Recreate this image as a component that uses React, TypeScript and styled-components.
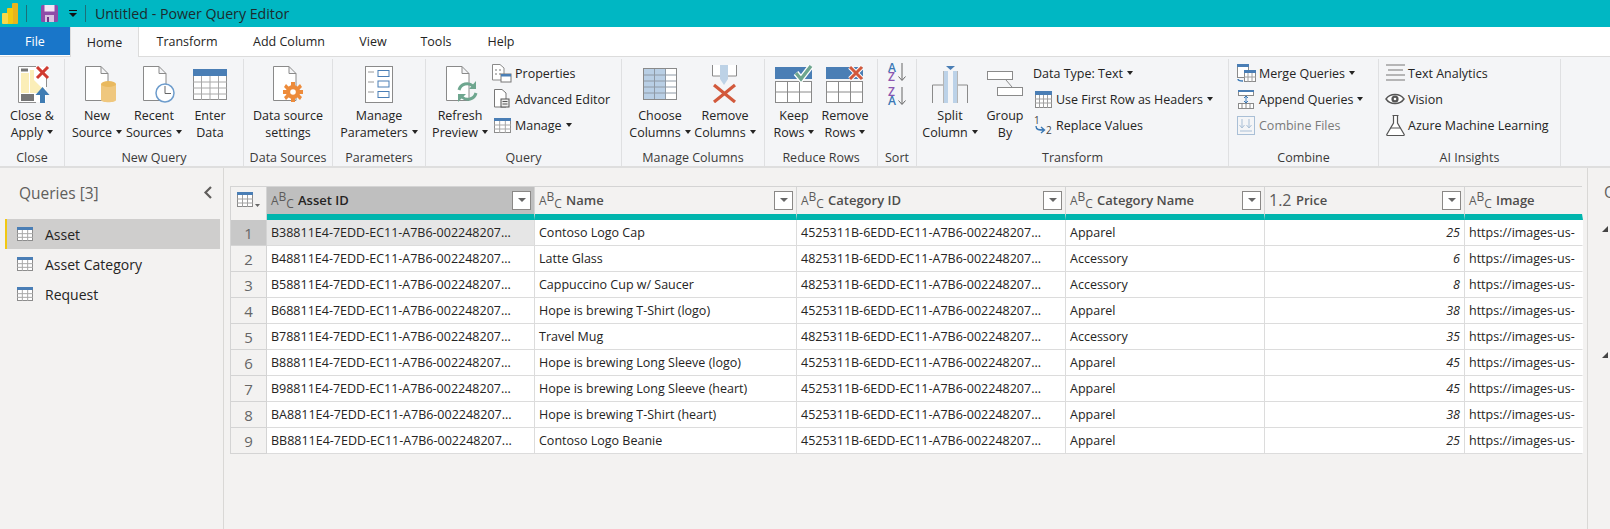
import React from 'react';
import styled, { createGlobalStyle } from 'styled-components';

const GlobalStyle = createGlobalStyle`
  html, body {
    margin: 0;
    padding: 0;
    background: #f3f2f1;
    overflow: hidden;
  }
  * { box-sizing: border-box; }
`;

const FONT = `"Open Sans", "Noto Sans", sans-serif`;

const Page = styled.div`
  width: 1610px;
  height: 529px;
  display: flex;
  flex-direction: column;
  font-family: ${FONT};
  font-size: 12.5px;
  color: #252423;
  overflow: hidden;
`;

const TitleBar = styled.div`
  height: 27px;
  background: #00b7c3;
  display: flex;
  align-items: center;
  padding-left: 2px;
  flex: none;
`;

const TitleSep = styled.span<{ $r?: number }>`
  width: 1px;
  height: 17px;
  background: #1c6f78;
  margin: 0 ${(p) => p.$r ?? 12}px 0 8px;
`;

const QatGap = styled.span`
  width: 11px;
`;

const TitleText = styled.span`
  font-size: 14.2px;
  color: #1c2b2e;
  margin-left: -3px;
`;

const TabBar = styled.div`
  height: 29px;
  background: #fff;
  display: flex;
  flex: none;
`;

const Tab = styled.div<{ $w: number; $active?: boolean; $file?: boolean }>`
  width: ${(p) => p.$w}px;
  height: ${(p) => (p.$active ? 30 : 28)}px;
  display: flex;
  align-items: center;
  justify-content: center;
  font-size: 12.5px;
  color: ${(p) => (p.$file ? '#fff' : '#252423')};
  background: ${(p) => (p.$file ? '#1976c9' : p.$active ? '#f4f5f7' : '#fff')};
  border-left: ${(p) => (p.$active ? '1px solid #dcdcdc' : 'none')};
  border-right: ${(p) => (p.$active ? '1px solid #dcdcdc' : 'none')};
  position: relative;
  z-index: 1;
`;

const Ribbon = styled.div`
  height: 112px;
  background: #f4f5f7;
  border-top: 1px solid #dcdcdc;
  border-bottom: 2px solid #dedede;
  display: flex;
  padding-top: 2px;
  flex: none;
`;

const Group = styled.div<{ $w: number }>`
  width: ${(p) => p.$w}px;
  height: 107px;
  border-right: 1px solid #dfe0e2;
  display: flex;
  flex-direction: column;
  flex: none;
`;

const GroupBody = styled.div<{ $pad?: number }>`
  flex: 1;
  display: flex;
  padding-left: ${(p) => p.$pad ?? 0}px;
`;

const GroupLabel = styled.div`
  height: 23px;
  padding-top: 5px;
  text-align: center;
  font-size: 12.5px;
  line-height: 18px;
  color: #3b3a39;
  white-space: nowrap;
  margin-bottom: -1px;
`;

const BigButton = styled.div<{ $w: number }>`
  width: ${(p) => p.$w}px;
  display: flex;
  flex-direction: column;
  align-items: center;
  padding-top: 5px;
  flex: none;
`;

const IconSlot = styled.div<{ $dx?: number }>`
  height: 40px;
  display: flex;
  align-items: center;
  justify-content: center;
  margin-bottom: 3px;
  padding-left: ${(p) => p.$dx ?? 0}px;
`;

const BigLabel = styled.div`
  font-size: 12.5px;
  line-height: 17px;
  text-align: center;
  white-space: nowrap;
  color: #252423;
`;

const Caret = styled.span`
  display: inline-block;
  width: 0;
  height: 0;
  border-left: 3.5px solid transparent;
  border-right: 3.5px solid transparent;
  border-top: 4px solid #252423;
  margin-left: 4px;
  vertical-align: 3px;
`;

const SmallStack = styled.div<{ $ml?: number }>`
  display: flex;
  flex-direction: column;
  padding-top: 1px;
  margin-left: ${(p) => p.$ml ?? 0}px;
  flex: none;
`;

const SmallRow = styled.div<{ $off?: boolean }>`
  height: 26px;
  display: flex;
  align-items: center;
  gap: 3px;
  white-space: nowrap;
  color: ${(p) => (p.$off ? '#7a7a7a' : '#252423')};
`;

const SmallIcon = styled.span`
  width: 20px;
  height: 20px;
  display: flex;
  align-items: center;
  justify-content: center;
  flex: none;
`;

const SortStack = styled.div`
  display: flex;
  flex-direction: column;
  padding: 3px 0 0 9px;
  gap: 4px;
`;

const SortSvg = styled.svg`
  overflow: visible;
`;

const Body = styled.div`
  flex: 1;
  display: flex;
  min-height: 0;
`;

const Sidebar = styled.div`
  width: 224px;
  border-right: 1px solid #d9d8d6;
  padding-top: 13px;
  flex: none;
`;

const SidebarHead = styled.div`
  height: 23px;
  display: flex;
  align-items: center;
  justify-content: space-between;
  padding: 0 10px 0 19px;
  font-size: 15.5px;
  color: #605e5c;
  margin-bottom: 15px;
`;

const QueryItem = styled.div<{ $active?: boolean }>`
  width: 215px;
  margin-left: 5px;
  height: 30px;
  display: flex;
  align-items: center;
  gap: 12px;
  padding-left: 10px;
  font-size: 14px;
  color: #252423;
  background: ${(p) => (p.$active ? '#cfcecd' : 'transparent')};
  border-left: 2px solid ${(p) => (p.$active ? '#f2c811' : 'transparent')};
`;

const Main = styled.div`
  flex: 1;
  padding: 18px 0 0 6px;
  min-width: 0;
`;

const Grid = styled.div`
  width: 1352px;
  display: grid;
  grid-template-columns: 36px 268px 262px 269px 199px 200px 118px;
  border-top: 1px solid #d4d4d4;
  border-left: 1px solid #d4d4d4;
  font-size: 12.5px;
`;

const Corner = styled.div`
  height: 33px;
  background: #f3f2f1;
  border-right: 1px solid #d4d4d4;
  display: flex;
  align-items: flex-start;
  justify-content: center;
  padding-top: 5px;
`;

const Head = styled.div<{ $sel?: boolean; $last?: boolean }>`
  height: 33px;
  background: ${(p) => (p.$sel ? '#bfbfbf' : '#f3f2f1')};
  border-bottom: 6px solid #00b5ad;
  border-right: 1px solid ${(p) => (p.$last ? 'transparent' : '#d4d4d4')};
  display: flex;
  align-items: center;
  padding: 0 3px 1px 4px;
  font-weight: 600;
  color: ${(p) => (p.$sel ? '#252423' : '#4e4d4c')};
  font-size: 13px;
  white-space: nowrap;
`;

const TypeTag = styled.span`
  width: 26px;
  flex: none;
  font-weight: 400;
  color: #5c5b5a;
  display: inline-flex;
  align-items: center;
`;

const TypeLetter = styled.span<{ $y: number }>`
  font-size: 12px;
  line-height: 12px;
  transform: translateY(${(p) => p.$y}px);
`;

const NumMark = styled(TypeTag)`
  font-size: 16px;
  color: #5c5b5a;
`;

const HeadName = styled.span`
  flex: 1;
  margin-left: 1px;
`;

const Filter = styled.span`
  width: 19px;
  height: 19px;
  background: #fff;
  border: 1px solid #8a8886;
  display: flex;
  align-items: center;
  justify-content: center;
  flex: none;
  &::after {
    content: '';
    border-left: 4px solid transparent;
    border-right: 4px solid transparent;
    border-top: 4px solid #666;
  }
`;

const RowNum = styled.div<{ $sel?: boolean }>`
  height: 26px;
  background: ${(p) => (p.$sel ? '#c8c8c8' : '#f3f2f1')};
  border-right: 1px solid #d4d4d4;
  border-bottom: 1px solid #d4d4d4;
  display: flex;
  align-items: center;
  justify-content: center;
  font-size: 15px;
  color: #666;
`;

const Cell = styled.div<{ $sel?: boolean; $num?: boolean; $last?: boolean }>`
  height: 26px;
  background: ${(p) => (p.$sel ? '#e6e6e6' : '#fff')};
  border-right: 1px solid ${(p) => (p.$last ? 'transparent' : '#dcdcdc')};
  border-bottom: 1px solid #dcdcdc;
  display: flex;
  align-items: center;
  justify-content: ${(p) => (p.$num ? 'flex-end' : 'flex-start')};
  padding: 0 4px;
  font-style: ${(p) => (p.$num ? 'italic' : 'normal')};
  white-space: nowrap;
  overflow: hidden;
  color: #252423;
`;

const RightPane = styled.div`
  width: 23px;
  flex: none;
  border-left: 1px solid #d9d8d6;
  padding: 13px 0 0 16px;
  position: relative;
  overflow: hidden;
  font-size: 15.5px;
  color: #605e5c;
  white-space: nowrap;
`;

const PaneMark = styled.div<{ $top: number }>`
  position: absolute;
  left: 14px;
  top: ${(p) => p.$top}px;
  width: 0;
  height: 0;
  border-left: 6px solid transparent;
  border-bottom: 6px solid #444;
`;

// ---- icons ----

const TableIcon = ({ w = 16, h = 14, cols = 3, rows = 2 }: { w?: number; h?: number; cols?: number; rows?: number }) => {
  const top = Math.round(h * 0.22);
  const lines = [];
  for (let i = 1; i < cols; i++) {
    const x = (w * i) / cols;
    lines.push(<path key={`c${i}`} d={`M${x} ${top}V${h}`} stroke="#a8a8a8" strokeWidth="1" />);
  }
  for (let i = 1; i <= rows; i++) {
    const y = top + ((h - top) * i) / (rows + 1);
    lines.push(<path key={`r${i}`} d={`M0 ${y}H${w}`} stroke="#a8a8a8" strokeWidth="1" />);
  }
  return (
    <svg width={w} height={h} viewBox={`0 0 ${w} ${h}`}>
      <rect x=".5" y=".5" width={w - 1} height={h - 1} fill="#fff" stroke="#8d8d8d" />
      {lines}
      <rect x="0" y="0" width={w} height={top} fill="#4a7eb5" />
    </svg>
  );
};

const Doc = () => (
  <path d="M1.5 1.5H17L24 8.5V35.5H1.5Z M17 1.5V8.5H24" fill="#fff" stroke="#8a8a8a" strokeWidth="1" />
);

const PowerBiLogo = () => (
  <svg width="16" height="21" viewBox="0 0 16 21">
    <rect x="10" y="0" width="6" height="21" rx="1" fill="#e8b41d" />
    <rect x="5" y="5" width="6" height="16" rx="1" fill="#f2c811" />
    <rect x="0" y="10" width="6" height="11" rx="1" fill="#f8d94a" />
  </svg>
);

const SaveIcon = () => (
  <svg width="17" height="17" viewBox="0 0 17 17">
    <rect width="17" height="17" rx="1.5" fill="#8e4ca8" />
    <rect x="3.5" y="0" width="10" height="6.5" fill="#f1e7f5" />
    <rect x="4" y="10" width="9" height="7" fill="#d9c1e2" />
    <rect x="6" y="12" width="2" height="5" fill="#6e3589" />
  </svg>
);

const QatCaret = () => (
  <svg width="8" height="9" viewBox="0 0 8 9">
    <path d="M0 1H8V2H0Z M0 4H8L4 8Z" fill="#111" />
  </svg>
);

const CloseApplyIcon = () => (
  <svg width="32" height="37" viewBox="0 0 32 37">
    <rect x="1" y="1" width="27" height="35" fill="#fff" />
    <path d="M.5 .5V36.5M.5 .5H18M.5 36.5H18M28.5 12V21" fill="none" stroke="#8f8f8f" />
    <path d="M3 7H11V27H3Z M12 4H16V14L27 25V27H12Z" fill="#fbeeb8" />
    <rect x="3" y="2.5" width="7" height="3" fill="#767676" />
    <rect x="3" y="28" width="13" height="7" fill="#767676" />
    <path d="M19 1L30 12M30 1L19 12" stroke="#d03a30" strokeWidth="3" />
    <path d="M24.5 21L17.5 29H22V37H27V29H31.5Z" fill="#3f7cb3" />
  </svg>
);

const NewSourceIcon = () => (
  <svg width="33" height="38" viewBox="0 0 33 38">
    <Doc />
    <path d="M17 19H32V35C32 38 17 38 17 35Z" fill="#efc77e" />
    <ellipse cx="24.5" cy="19" rx="7.5" ry="3" fill="#e9b95f" />
  </svg>
);

const RecentIcon = () => (
  <svg width="33" height="38" viewBox="0 0 33 38">
    <Doc />
    <circle cx="23" cy="28" r="9" fill="#fff" stroke="#6d9ccc" strokeWidth="1.5" />
    <path d="M23 21V28.5H29" fill="none" stroke="#666" strokeWidth="1" />
  </svg>
);

const GearIcon = () => (
  <svg width="33" height="38" viewBox="0 0 33 38">
    <Doc />
    <circle cx="21" cy="27" r="7" fill="#ed8b3b" />
    <path d="M19 17H23V21H19Z M19 33H23V37H19Z M11 25H15V29H11Z M27 25H31V29H27Z M14 19L17 22L15 25L12 22Z M28 19L25 22L27 25L30 22Z M14 35L17 32L15 29L12 32Z M28 35L25 32L27 29L30 32Z" fill="#ed8b3b" />
    <circle cx="21" cy="27" r="2.8" fill="#fff" />
  </svg>
);

const ParamsIcon = () => (
  <svg width="29" height="37" viewBox="0 0 29 37">
    <rect x=".5" y=".5" width="27" height="36" fill="#fff" stroke="#8a8a8a" />
    <path d="M3 6H9M3 16H9M3 26H9" stroke="#9a9a9a" />
    <rect x="13" y="4.5" width="11" height="6" fill="#fff" stroke="#4a7eb5" />
    <rect x="13" y="15" width="11" height="6" fill="#fff" stroke="#4a7eb5" />
    <rect x="13" y="25.5" width="11" height="6" fill="#fff" stroke="#4a7eb5" />
  </svg>
);

const RefreshIcon = () => (
  <svg width="33" height="38" viewBox="0 0 33 38">
    <Doc />
    <path d="M14 25A8.5 8.5 0 0 1 28 21" fill="none" stroke="#6ea68f" strokeWidth="3" />
    <path d="M31 16V24H24Z" fill="#6ea68f" />
    <path d="M31 28A8.5 8.5 0 0 1 17 32" fill="none" stroke="#6ea68f" strokeWidth="3" />
    <path d="M13 37V29H21Z" fill="#6ea68f" />
  </svg>
);

const PropsIcon = () => (
  <svg width="20" height="19" viewBox="0 0 20 19">
    <path d="M.5 .5H8L12 4V16H.5Z" fill="#fff" stroke="#8a8a8a" />
    <path d="M3 6H5M7 6H9M3 10H5M7 10H9" stroke="#777" />
    <rect x="9" y="10" width="10" height="8" fill="#fff" stroke="#777" />
    <rect x="9" y="10" width="10" height="2.5" fill="#4a7eb5" />
  </svg>
);

const AdvancedIcon = () => (
  <svg width="17" height="20" viewBox="0 0 17 20">
    <path d="M.5 .5H8L12 4V18H.5Z" fill="#fff" stroke="#777" />
    <rect x="7" y="10" width="8" height="8" fill="#eee" stroke="#555" />
    <path d="M8.5 12.5H13.5M8.5 15H13.5" stroke="#555" />
  </svg>
);

const ChooseIcon = () => (
  <svg width="34" height="33" viewBox="0 0 34 33">
    <rect x=".5" y=".5" width="33" height="31" fill="#fff" stroke="#8a8a8a" />
    <rect x="1" y="1" width="22" height="30" fill="#b9cfe5" />
    <path d="M11.5 1V31M22.5 1V31M1 7H33M1 13H33M1 19H33M1 25H33" stroke="#8f9aa6" strokeWidth="1" />
  </svg>
);

const RemoveColIcon = () => (
  <svg width="27" height="38" viewBox="0 0 27 38">
    <path d="M.5 0V11H24.5V0" fill="#fff" stroke="#8a8a8a" />
    <path d="M8 0H16V14L12 20L8 14Z" fill="#bdd2e6" />
    <path d="M2 20L23 37M23 20L2 37" stroke="#d2593c" strokeWidth="3.2" />
  </svg>
);

const RowsIcon = ({ mark }: { mark: 'check' | 'x' }) => (
  <svg width="38" height="38" viewBox="0 0 38 38">
    <rect x="0" y="2" width="37" height="12" fill="#4a7eb5" />
    <rect x=".5" y="16.5" width="36" height="21" fill="#fff" stroke="#8a8a8a" />
    <path d="M12.5 16V37M24.5 16V37M1 27H37" stroke="#8a8a8a" />
    {mark === 'check' ? (
      <>
        <path d="M21 8L26 14L36 1" fill="none" stroke="#fff" strokeWidth="6" />
        <path d="M21 8L26 14L36 1" fill="none" stroke="#6ea68f" strokeWidth="3.4" />
      </>
    ) : (
      <>
        <path d="M24 2L36 14M36 2L24 14" stroke="#fff" strokeWidth="5" />
        <path d="M24 2L36 14M36 2L24 14" stroke="#d2593c" strokeWidth="3" />
      </>
    )}
  </svg>
);

const SortIcon = ({ first, second }: { first: string; second: string }) => {
  const colour = (l: string) => (l === 'A' ? '#3a78b5' : '#8a55b0');
  return (
    <SortSvg width="20" height="20" viewBox="0 0 20 20">
      <path d="M15 1V18M11.5 14.5L15 18.5L18.5 14.5" fill="none" stroke="#666" />
      <text x="1" y="9.5" fontSize="12" fontWeight="600" fontFamily="'Open Sans', sans-serif" fill={colour(first)}>{first}</text>
      <text x="1" y="19" fontSize="12" fontWeight="600" fontFamily="'Open Sans', sans-serif" fill={colour(second)}>{second}</text>
    </SortSvg>
  );
};

const SplitIcon = () => (
  <svg width="36" height="37" viewBox="0 0 36 37">
    <path d="M.5 37V19H11M35.5 37V19H26" fill="none" stroke="#8a8a8a" />
    <rect x="11" y="5" width="5" height="32" fill="#bcd2e8" />
    <rect x="21" y="5" width="5" height="32" fill="#bcd2e8" />
    <path d="M11.5 5V37M25.5 5V37" stroke="#b5b5b5" />
    <path d="M14 0H23L18.5 4Z" fill="#4a7eb5" />
  </svg>
);

const GroupByIcon = () => (
  <svg width="36" height="27" viewBox="0 0 36 27">
    <rect x=".5" y=".5" width="25" height="8" fill="#fff" stroke="#8a8a8a" />
    <rect x="10.5" y="16.5" width="25" height="8" fill="#fff" stroke="#8a8a8a" />
    <path d="M19 9L25 16" stroke="#8a8a8a" />
  </svg>
);

const GridSmall = () => (
  <svg width="17" height="17" viewBox="0 0 17 17">
    <rect x=".5" y=".5" width="16" height="16" fill="#fff" stroke="#8a8a8a" />
    <rect x="0" y="0" width="17" height="4" fill="#4a7eb5" />
    <path d="M4.5 4V17M8.5 4V17M12.5 4V17M0 8H17M0 12H17" stroke="#a0a0a0" />
  </svg>
);

const ReplaceIcon = () => (
  <svg width="19" height="19" viewBox="0 0 19 19">
    <text x="0" y="8" fontSize="10" fontFamily="'Open Sans', sans-serif" fill="#444">1</text>
    <text x="12" y="18" fontSize="10" fontFamily="'Open Sans', sans-serif" fill="#444">2</text>
    <path d="M2 10C2 14 5 14 10 14M7 11L10.5 14L7 17" fill="none" stroke="#3a78b5" strokeWidth="1.4" />
  </svg>
);

const MergeIcon = () => (
  <svg width="19" height="19" viewBox="0 0 19 19">
    <rect x=".5" y=".5" width="11" height="13" fill="#fff" stroke="#8a8a8a" />
    <rect x="0" y="0" width="12" height="3" fill="#4a7eb5" />
    <rect x="7.5" y="6.5" width="11" height="11" fill="#fff" stroke="#8a8a8a" />
    <rect x="7" y="6" width="12" height="3" fill="#4a7eb5" />
    <path d="M11 9V18M15 9V18M7 13H19" stroke="#a0a0a0" />
    <path d="M1 15C1 17 3 17 6 17" fill="none" stroke="#3a78b5" strokeWidth="1.4" />
  </svg>
);

const AppendIcon = () => (
  <svg width="17" height="19" viewBox="0 0 17 19">
    <rect x=".5" y=".5" width="15" height="5" fill="#fff" stroke="#8a8a8a" />
    <rect x="0" y="0" width="16" height="2" fill="#4a7eb5" />
    <rect x=".5" y="13.5" width="15" height="5" fill="#fff" stroke="#8a8a8a" />
    <path d="M4 13V18M8 13V18M12 13V18" stroke="#8a8a8a" />
    <path d="M8 6V13M6 8L8 6L10 8M6 11L8 13L10 11" fill="none" stroke="#3a78b5" />
  </svg>
);

const CombineIcon = () => (
  <svg width="18" height="19" viewBox="0 0 18 19">
    <rect x=".5" y=".5" width="17" height="18" fill="#f4f5f7" stroke="#a9bfd6" />
    <path d="M5 3V11M2.5 9L5 12L7.5 9M12 3V11M9.5 9L12 12L14.5 9M3 15H15" fill="none" stroke="#a9bfd6" />
  </svg>
);

const TextAnalyticsIcon = () => (
  <svg width="19" height="18" viewBox="0 0 19 18">
    <path d="M0 1H19M2 6H17M0 11H19M0 16H19" stroke="#777" strokeWidth="1.2" />
  </svg>
);

const EyeIcon = () => (
  <svg width="20" height="14" viewBox="0 0 20 14">
    <path d="M1 7C5 1 15 1 19 7C15 13 5 13 1 7Z" fill="#fff" stroke="#555" strokeWidth="1.4" />
    <circle cx="10" cy="7" r="3.6" fill="#555" />
    <circle cx="10" cy="7" r="1.3" fill="#fff" />
  </svg>
);

const FlaskIcon = () => (
  <svg width="19" height="21" viewBox="0 0 19 21">
    <path d="M6.5 .5H12.5M7.5 .5V8L.8 19.5C.6 20 1 20.5 1.5 20.5H17.5C18 20.5 18.4 20 18.2 19.5L11.5 8V.5" fill="#fff" stroke="#555" strokeWidth="1.2" />
    <path d="M4.5 13H14.5" stroke="#555" />
  </svg>
);

const TableGridIcon = () => (
  <svg width="24" height="16" viewBox="0 0 24 16">
    <rect x=".5" y=".5" width="15" height="14" fill="#fff" stroke="#8a8a8a" />
    <rect x="0" y="0" width="16" height="3" fill="#4a7eb5" />
    <path d="M5.5 3V15M10.5 3V15M0 7H16M0 11H16" stroke="#a0a0a0" />
    <path d="M18 12H23L20.5 15Z" fill="#666" />
  </svg>
);

const ChevronLeft = () => (
  <svg width="10" height="13" viewBox="0 0 10 13">
    <path d="M8 1L2.5 6.5L8 12" fill="none" stroke="#605e5c" strokeWidth="2.2" />
  </svg>
);

const AbcMark = () => (
  <TypeTag>
    <TypeLetter $y={1}>A</TypeLetter>
    <TypeLetter $y={-3}>B</TypeLetter>
    <TypeLetter $y={4}>C</TypeLetter>
  </TypeTag>
);

// ---- data ----

const rows = [
  ['B38811E4-7EDD-EC11-A7B6-002248207...', 'Contoso Logo Cap', '4525311B-6EDD-EC11-A7B6-002248207...', 'Apparel', '25'],
  ['B48811E4-7EDD-EC11-A7B6-002248207...', 'Latte Glass', '4825311B-6EDD-EC11-A7B6-002248207...', 'Accessory', '6'],
  ['B58811E4-7EDD-EC11-A7B6-002248207...', 'Cappuccino Cup w/ Saucer', '4825311B-6EDD-EC11-A7B6-002248207...', 'Accessory', '8'],
  ['B68811E4-7EDD-EC11-A7B6-002248207...', 'Hope is brewing T-Shirt (logo)', '4525311B-6EDD-EC11-A7B6-002248207...', 'Apparel', '38'],
  ['B78811E4-7EDD-EC11-A7B6-002248207...', 'Travel Mug', '4825311B-6EDD-EC11-A7B6-002248207...', 'Accessory', '35'],
  ['B88811E4-7EDD-EC11-A7B6-002248207...', 'Hope is brewing Long Sleeve (logo)', '4525311B-6EDD-EC11-A7B6-002248207...', 'Apparel', '45'],
  ['B98811E4-7EDD-EC11-A7B6-002248207...', 'Hope is brewing Long Sleeve (heart)', '4525311B-6EDD-EC11-A7B6-002248207...', 'Apparel', '45'],
  ['BA8811E4-7EDD-EC11-A7B6-002248207...', 'Hope is brewing T-Shirt (heart)', '4525311B-6EDD-EC11-A7B6-002248207...', 'Apparel', '38'],
  ['BB8811E4-7EDD-EC11-A7B6-002248207...', 'Contoso Logo Beanie', '4525311B-6EDD-EC11-A7B6-002248207...', 'Apparel', '25'],
];

const columns = ['Asset ID', 'Name', 'Category ID', 'Category Name', 'Price', 'Image'];

function Big({ w, icon, top, bottom, caret, dx }: { w: number; icon: React.ReactNode; top: string; bottom: string; caret?: boolean; dx?: number }) {
  return (
    <BigButton $w={w}>
      <IconSlot $dx={dx}>{icon}</IconSlot>
      <BigLabel>{top}</BigLabel>
      <BigLabel>
        {bottom}
        {caret && <Caret />}
      </BigLabel>
    </BigButton>
  );
}

function Small({ icon, text, caret, off }: { icon?: React.ReactNode; text: string; caret?: boolean; off?: boolean }) {
  return (
    <SmallRow $off={off}>
      {icon && <SmallIcon>{icon}</SmallIcon>}
      <span>
        {text}
        {caret && <Caret />}
      </span>
    </SmallRow>
  );
}

export default function App() {
  return (
    <Page>
      <GlobalStyle />
      <TitleBar>
        <PowerBiLogo />
        <TitleSep $r={14} />
        <SaveIcon />
        <QatGap />
        <QatCaret />
        <TitleSep />
        <TitleText>Untitled - Power Query Editor</TitleText>
      </TitleBar>
      <TabBar>
        <Tab $w={70} $file>File</Tab>
        <Tab $w={69} $active>Home</Tab>
        <Tab $w={96}>Transform</Tab>
        <Tab $w={108}>Add Column</Tab>
        <Tab $w={60}>View</Tab>
        <Tab $w={66}>Tools</Tab>
        <Tab $w={64}>Help</Tab>
      </TabBar>
      <Ribbon>
        <Group $w={65}>
          <GroupBody>
            <Big w={64} dx={4} icon={<CloseApplyIcon />} top="Close &" bottom="Apply" caret />
          </GroupBody>
          <GroupLabel>Close</GroupLabel>
        </Group>
        <Group $w={179}>
          <GroupBody $pad={4}>
            <Big w={56} dx={6} icon={<NewSourceIcon />} top="New" bottom="Source" caret />
            <Big w={58} dx={8} icon={<RecentIcon />} top="Recent" bottom="Sources" caret />
            <Big w={54} icon={<TableIcon w={34} h={31} cols={4} rows={3} />} top="Enter" bottom="Data" />
          </GroupBody>
          <GroupLabel>New Query</GroupLabel>
        </Group>
        <Group $w={89}>
          <GroupBody>
            <Big w={88} icon={<GearIcon />} top="Data source" bottom="settings" />
          </GroupBody>
          <GroupLabel>Data Sources</GroupLabel>
        </Group>
        <Group $w={93}>
          <GroupBody>
            <Big w={92} icon={<ParamsIcon />} top="Manage" bottom="Parameters" caret />
          </GroupBody>
          <GroupLabel>Parameters</GroupLabel>
        </Group>
        <Group $w={196}>
          <GroupBody $pad={3}>
            <Big w={62} dx={2} icon={<RefreshIcon />} top="Refresh" bottom="Preview" caret />
            <SmallStack $ml={1}>
              <Small icon={<PropsIcon />} text="Properties" />
              <Small icon={<AdvancedIcon />} text="Advanced Editor" />
              <Small icon={<TableIcon w={17} h={15} cols={3} rows={2} />} text="Manage" caret />
            </SmallStack>
          </GroupBody>
          <GroupLabel>Query</GroupLabel>
        </Group>
        <Group $w={143}>
          <GroupBody $pad={6}>
            <Big w={64} icon={<ChooseIcon />} top="Choose" bottom="Columns" caret />
            <Big w={66} icon={<RemoveColIcon />} top="Remove" bottom="Columns" caret />
          </GroupBody>
          <GroupLabel>Manage Columns</GroupLabel>
        </Group>
        <Group $w={113}>
          <GroupBody $pad={4}>
            <Big w={50} icon={<RowsIcon mark="check" />} top="Keep" bottom="Rows" caret />
            <Big w={52} icon={<RowsIcon mark="x" />} top="Remove" bottom="Rows" caret />
          </GroupBody>
          <GroupLabel>Reduce Rows</GroupLabel>
        </Group>
        <Group $w={39}>
          <GroupBody>
            <SortStack>
              <SortIcon first="A" second="Z" />
              <SortIcon first="Z" second="A" />
            </SortStack>
          </GroupBody>
          <GroupLabel>Sort</GroupLabel>
        </Group>
        <Group $w={312}>
          <GroupBody $pad={6}>
            <Big w={54} icon={<SplitIcon />} top="Split" bottom="Column" caret />
            <Big w={56} icon={<GroupByIcon />} top="Group" bottom="By" />
            <SmallStack>
              <Small text="Data Type: Text" caret />
              <Small icon={<GridSmall />} text="Use First Row as Headers" caret />
              <Small icon={<ReplaceIcon />} text="Replace Values" />
            </SmallStack>
          </GroupBody>
          <GroupLabel>Transform</GroupLabel>
        </Group>
        <Group $w={150}>
          <GroupBody $pad={7}>
            <SmallStack>
              <Small icon={<MergeIcon />} text="Merge Queries" caret />
              <Small icon={<AppendIcon />} text="Append Queries" caret />
              <Small icon={<CombineIcon />} text="Combine Files" off />
            </SmallStack>
          </GroupBody>
          <GroupLabel>Combine</GroupLabel>
        </Group>
        <Group $w={182}>
          <GroupBody $pad={6}>
            <SmallStack>
              <Small icon={<TextAnalyticsIcon />} text="Text Analytics" />
              <Small icon={<EyeIcon />} text="Vision" />
              <Small icon={<FlaskIcon />} text="Azure Machine Learning" />
            </SmallStack>
          </GroupBody>
          <GroupLabel>AI Insights</GroupLabel>
        </Group>
      </Ribbon>
      <Body>
        <Sidebar>
          <SidebarHead>
            <span>Queries [3]</span>
            <ChevronLeft />
          </SidebarHead>
          <QueryItem $active>
            <TableIcon w={16} h={14} cols={3} rows={2} />
            Asset
          </QueryItem>
          <QueryItem>
            <TableIcon w={16} h={14} cols={3} rows={2} />
            Asset Category
          </QueryItem>
          <QueryItem>
            <TableIcon w={16} h={14} cols={3} rows={2} />
            Request
          </QueryItem>
        </Sidebar>
        <Main>
          <Grid>
            <Corner>
              <TableGridIcon />
            </Corner>
            {columns.map((c, i) => (
              <Head key={c} $sel={i === 0} $last={i === 5}>
                {c === 'Price' ? <NumMark>1.2</NumMark> : <AbcMark />}
                <HeadName>{c}</HeadName>
                {i < 5 && <Filter />}
              </Head>
            ))}
            {rows.map((r, i) => (
              <React.Fragment key={r[0]}>
                <RowNum $sel={i === 0}>{i + 1}</RowNum>
                <Cell $sel={i === 0}>{r[0]}</Cell>
                <Cell>{r[1]}</Cell>
                <Cell>{r[2]}</Cell>
                <Cell>{r[3]}</Cell>
                <Cell $num>{r[4]}</Cell>
                <Cell $last>https://images-us-</Cell>
              </React.Fragment>
            ))}
          </Grid>
        </Main>
        <RightPane>
          Query Settings
          <PaneMark $top={58} />
          <PaneMark $top={184} />
        </RightPane>
      </Body>
    </Page>
  );
}
